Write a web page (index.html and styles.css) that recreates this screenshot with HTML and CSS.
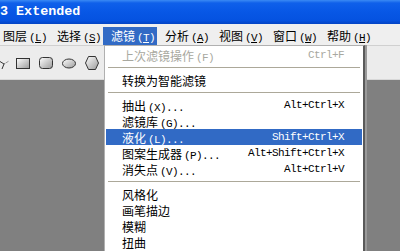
FILE: index.html
```html
<!DOCTYPE html>
<html lang="zh-CN">
<head>
    <meta charset="UTF-8">
    <meta name="viewport" content="width=device-width, initial-scale=1.0">
    <title>Photoshop CS3 Extended - 滤镜</title>
    <link rel="stylesheet" href="styles.css">
</head>
<body>

    <div class="window">
        <div class="titlebar">3 Extended</div>

        <div class="menubar">
            <span class="menu">图层<span class="key">(<u>L</u>)</span></span>
            <span class="menu">选择<span class="key">(<u>S</u>)</span></span>
            <span class="menu active">滤镜<span class="key">(<u>T</u>)</span></span>
            <span class="menu">分析<span class="key">(<u>A</u>)</span></span>
            <span class="menu">视图<span class="key">(<u>V</u>)</span></span>
            <span class="menu">窗口<span class="key">(<u>W</u>)</span></span>
            <span class="menu">帮助<span class="key">(<u>H</u>)</span></span>
        </div>

        <div class="toolbar">
            <svg class="tool tool-cut" width="10" height="16" viewBox="0 0 10 16">
                <path d="M-4 4 L4 9 L2 14" fill="none" stroke="#333" stroke-width="1"/>
                <path d="M4 9 L9 6" fill="none" stroke="#555" stroke-width="1" stroke-dasharray="1 1"/>
            </svg>
            <svg class="tool" width="16" height="16" viewBox="0 0 16 16">
                <defs>
                    <linearGradient id="g1" x1="0" y1="0" x2="1" y2="1">
                        <stop offset="0" stop-color="#ffffff"/>
                        <stop offset="1" stop-color="#9a9a9a"/>
                    </linearGradient>
                </defs>
                <rect x="1.5" y="3.5" width="13" height="10" fill="url(#g1)" stroke="#333"/>
            </svg>
            <svg class="tool" width="16" height="16" viewBox="0 0 16 16">
                <rect x="1.5" y="2.5" width="13" height="11" rx="3" fill="url(#g1)" stroke="#333"/>
            </svg>
            <svg class="tool" width="16" height="16" viewBox="0 0 16 16">
                <ellipse cx="8" cy="8.5" rx="6.5" ry="4.5" fill="url(#g1)" stroke="#333"/>
            </svg>
            <svg class="tool" width="16" height="16" viewBox="0 0 16 16">
                <path d="M4.5 1.5 L11.5 1.5 L14.5 8 L11.5 14.5 L4.5 14.5 L1.5 8 Z" fill="url(#g1)" stroke="#333"/>
            </svg>
            <span class="tb-grip"></span>
        </div>

        <div class="canvas"></div>

        <div class="dropdown">
            <div class="item disabled">
                <span class="label">上次滤镜操作<span class="key">(F)</span></span>
                <span class="shortcut">Ctrl+F</span>
            </div>
            <div class="sep"></div>
            <div class="item">
                <span class="label">转换为智能滤镜</span>
            </div>
            <div class="sep"></div>
            <div class="item">
                <span class="label">抽出<span class="key">(X)...</span></span>
                <span class="shortcut">Alt+Ctrl+X</span>
            </div>
            <div class="item">
                <span class="label">滤镜库<span class="key">(G)...</span></span>
            </div>
            <div class="item selected">
                <span class="label">液化<span class="key">(L)...</span></span>
                <span class="shortcut">Shift+Ctrl+X</span>
            </div>
            <div class="item">
                <span class="label">图案生成器<span class="key">(P)...</span></span>
                <span class="shortcut">Alt+Shift+Ctrl+X</span>
            </div>
            <div class="item">
                <span class="label">消失点<span class="key">(V)...</span></span>
                <span class="shortcut">Alt+Ctrl+V</span>
            </div>
            <div class="sep"></div>
            <div class="item"><span class="label">风格化</span></div>
            <div class="item"><span class="label">画笔描边</span></div>
            <div class="item"><span class="label">模糊</span></div>
            <div class="item"><span class="label">扭曲</span></div>
        </div>
    </div>

</body>
</html>
```

FILE: styles.css
```css
body {
    margin: 0;
    background-color: #808080;
    font-family: 'Noto Sans CJK SC', sans-serif;
    font-size: 12px;
    color: #000;
    overflow: hidden;
}

.window {
    position: relative;
    display: flex;
    flex-direction: column;
    width: 400px;
    height: 251px;
    overflow: hidden;
}

.titlebar {
    height: 24px;
    line-height: 24px;
    background: linear-gradient(#3a8af4 0, #0f60ea 3px, #0858e6 45%, #0552e0 85%, #0344c4 100%);
    color: #fff;
    font-family: 'Liberation Mono', monospace;
    font-weight: bold;
    font-size: 13.4px;
    white-space: nowrap;
}

.menubar {
    display: flex;
    height: 21px;
    margin-left: -5px;
    background-color: #efefef;
}

.menu {
    width: 54px;
    flex: none;
    box-sizing: border-box;
    height: 18px;
    margin-top: 3px;
    padding-left: 8px;
    line-height: 18px;
    white-space: nowrap;
}

.menu.active {
    background-color: #316ac5;
    color: #fff;
}

.key {
    padding-left: 2px;
    font-family: 'Liberation Mono', monospace;
    font-size: 11px;
    letter-spacing: -0.6px;
}

.toolbar {
    display: flex;
    align-items: center;
    gap: 7px;
    height: 33px;
    background-color: #ececec;
    border-top: 1px solid #d0d0d0;
    border-bottom: 1px solid #d8d8d8;
}

.tool {
    flex: none;
}

.tool-cut {
    margin-right: -2px;
}

.tb-grip {
    width: 4px;
    height: 9px;
    margin-left: auto;
    margin-right: 33px;
    background-color: #222;
}

.canvas {
    flex: 1;
    background-color: #808080;
}

.dropdown {
    position: absolute;
    left: 104px;
    top: 45px;
    width: 261px;
    height: 230px;
    box-sizing: border-box;
    padding: 1px 1px;
    background-color: #fff;
    border: 1px solid #b0b0b0;
    border-right: 2px solid #5a5a5a;
    box-shadow: 2px 0 0 #9a9a9a;
}

.item {
    display: flex;
    justify-content: space-between;
    align-items: center;
    height: 16px;
    padding: 0 18px 0 16px;
    white-space: nowrap;
}

.item.disabled {
    color: #a8a8a0;
}

.item.selected {
    background-color: #316ac5;
    color: #fff;
}

.shortcut {
    font-family: 'Liberation Mono', monospace;
    font-size: 11px;
    letter-spacing: -0.6px;
}

.sep {
    height: 1px;
    margin: 4px 2px;
    background-color: #aca899;
}
```
